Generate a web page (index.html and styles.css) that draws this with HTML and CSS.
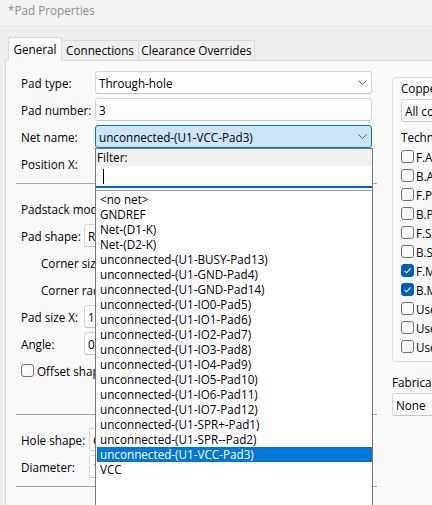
FILE: index.html
```html
<!DOCTYPE html>
<html>
<head>
<meta charset="utf-8">
<link rel="stylesheet" href="styles.css">
</head>
<body>
<div class="window">
  <div class="titlebar">*Pad Properties</div>
  <div class="tabs">
    <div class="tab active">General</div>
    <div class="tab t-conn">Connections</div>
    <div class="tab t-clear">Clearance Overrides</div>
  </div>
  <div class="panel">
    <div class="main">
      <div class="sec">
        <div class="row"><span class="lbl">Pad type:</span><div class="field combo"><span>Through-hole</span><svg class="chev" width="9" height="5" viewBox="0 0 9 5"><path d="M0.5 0.5 L4.5 4.5 L8.5 0.5" fill="none" stroke="#5f5f5f" stroke-width="1"/></svg></div></div>
        <div class="row"><span class="lbl">Pad number:</span><div class="field"><span>3</span></div></div>
        <div class="row"><span class="lbl">Net name:</span><div class="field combo focus"><span>unconnected-(U1-VCC-Pad3)</span><svg class="chev" width="9" height="5" viewBox="0 0 9 5"><path d="M0.5 0.5 L4.5 4.5 L8.5 0.5" fill="none" stroke="#5f5f5f" stroke-width="1"/></svg></div></div>
        <div class="row"><span class="lbl">Position X:</span><div class="field"><span>0</span></div></div>
      </div>
      <div class="sec sep sec-pad">
        <div class="row"><span class="lbl wide">Padstack mode:</span><div class="field combo"><span>Normal</span></div></div>
        <div class="row"><span class="lbl">Pad shape:</span><div class="field combo"><span>Rounded rectangle</span></div></div>
        <div class="row indent"><span class="lbl">Corner size:</span><div class="field"><span>25</span></div></div>
        <div class="row indent"><span class="lbl">Corner radius:</span><div class="field"><span>0.425</span></div></div>
        <div class="row"><span class="lbl">Pad size X:</span><div class="field"><span>1.7</span></div></div>
        <div class="row"><span class="lbl">Angle:</span><div class="field"><span>0</span></div></div>
        <div class="row"><span class="box"></span><span class="cbtext">Offset shape from hole</span></div>
      </div>
      <div class="sec sep sec-hole">
        <div class="row"><span class="lbl">Hole shape:</span><div class="field combo"><span>Circular</span></div></div>
        <div class="row"><span class="lbl">Diameter:</span><div class="field"><span>1</span></div></div>
      </div>
      <div class="sec sep sec-end"></div>
    </div>
    <div class="side">
      <div class="group">
        <div class="glabel">Copper layers:</div>
        <div class="field combo sfield"><span>All copper layers</span></div>
        <div class="glabel tech">Technical layers:</div>
        <div class="checks">
          <div class="chk-row"><span class="box"></span><span>F.Adhesive</span></div>
          <div class="chk-row"><span class="box"></span><span>B.Adhesive</span></div>
          <div class="chk-row"><span class="box"></span><span>F.Paste</span></div>
          <div class="chk-row"><span class="box"></span><span>B.Paste</span></div>
          <div class="chk-row"><span class="box"></span><span>F.Silkscreen</span></div>
          <div class="chk-row"><span class="box"></span><span>B.Silkscreen</span></div>
          <div class="chk-row"><span class="box on"><svg width="11" height="11" viewBox="0 0 11 11"><path d="M2.5 5.8 L4.6 7.8 L8.6 3.4" fill="none" stroke="#fff" stroke-width="1.1"/></svg></span><span>F.Mask</span></div>
          <div class="chk-row"><span class="box on"><svg width="11" height="11" viewBox="0 0 11 11"><path d="M2.5 5.8 L4.6 7.8 L8.6 3.4" fill="none" stroke="#fff" stroke-width="1.1"/></svg></span><span>B.Mask</span></div>
          <div class="chk-row"><span class="box"></span><span>User.Drawings</span></div>
          <div class="chk-row"><span class="box"></span><span>User.Comments</span></div>
          <div class="chk-row"><span class="box"></span><span>User.Eco1</span></div>
        </div>
      </div>
      <div class="glabel fab">Fabrication property:</div>
      <div class="field combo sfield"><span>None</span></div>
    </div>
  </div>

  <div class="popup">
    <div class="filterbar">Filter:</div>
    <div class="filterinput"><span class="caret"></span></div>
    <div class="list">
      <div class="item">&lt;no net&gt;</div>
      <div class="item">GNDREF</div>
      <div class="item">Net-(D1-K)</div>
      <div class="item">Net-(D2-K)</div>
      <div class="item">unconnected-(U1-BUSY-Pad13)</div>
      <div class="item">unconnected-(U1-GND-Pad4)</div>
      <div class="item">unconnected-(U1-GND-Pad14)</div>
      <div class="item">unconnected-(U1-IO0-Pad5)</div>
      <div class="item">unconnected-(U1-IO1-Pad6)</div>
      <div class="item">unconnected-(U1-IO2-Pad7)</div>
      <div class="item">unconnected-(U1-IO3-Pad8)</div>
      <div class="item">unconnected-(U1-IO4-Pad9)</div>
      <div class="item">unconnected-(U1-IO5-Pad10)</div>
      <div class="item">unconnected-(U1-IO6-Pad11)</div>
      <div class="item">unconnected-(U1-IO7-Pad12)</div>
      <div class="item">unconnected-(U1-SPR+-Pad1)</div>
      <div class="item">unconnected-(U1-SPR--Pad2)</div>
      <div class="item sel">unconnected-(U1-VCC-Pad3)</div>
      <div class="item">VCC</div>
    </div>
  </div>
</div>
</body>
</html>
```

FILE: styles.css
```css
html, body {
  margin: 0;
  padding: 0;
}
body {
  width: 432px;
  height: 505px;
  overflow: hidden;
  background: #f0f0f0;
  font-family: "Open Sans", "Noto Sans", sans-serif;
  font-size: 11.7px;
  color: #000;
}
.window {
  position: relative;
  height: 505px;
  overflow: hidden;
}
.titlebar {
  height: 25px;
  line-height: 20px;
  padding-left: 8px;
  background: #f3f3f3;
  color: #8e8e8e;
  font-size: 11.7px;
}
.tabs {
  height: 35px;
  box-sizing: border-box;
  display: flex;
  align-items: flex-end;
  padding-left: 8px;
  background: #efefef;
  position: relative;
  z-index: 1;
}
.tab {
  height: 20px;
  line-height: 19px;
  box-sizing: border-box;
  border: 1px solid #dadada;
  border-left: none;
  border-bottom: none;
  text-align: center;
  background: #f0f0f0;
  white-space: nowrap;
}
.tab.active {
  width: 54px;
  height: 24px;
  line-height: 23px;
  border-left: 1px solid #dadada;
  background: #f9f9f9;
  margin-bottom: -1px;
}
.t-conn { width: 77px; }
.t-clear { width: 116px; }

.panel {
  display: flex;
  margin-left: 5px;
  border-left: 1px solid #dadada;
  border-top: 1px solid #dadada;
  background: #f9f9f9;
  height: 444px;
  padding: 10px 0 0 10px;
  overflow: hidden;
}
.main {
  width: 361px;
  flex: none;
}
.sep {
  border-top: 1px solid #a9a9a9;
}
.sec-pad {
  margin-top: 8px;
  padding-top: 13px;
}
.sec-hole {
  margin-top: 32px;
  padding-top: 13px;
}
.sec-end {
  margin-top: 8px;
}
.row {
  display: flex;
  align-items: center;
  height: 23px;
  margin-bottom: 4px;
  padding: 0 5px;
}
.lbl {
  width: 74px;
  flex: none;
  white-space: nowrap;
  overflow: hidden;
}
.sec-pad .lbl { width: 63px; }
.sec-pad .lbl.wide { width: 90px; }
.sec-pad .indent { padding-left: 25px; }
.sec-pad .indent .lbl { width: 80px; }
.sec-hole .lbl { width: 68px; }

.field {
  flex: 1;
  height: 23px;
  box-sizing: border-box;
  border: 1px solid #d6d6d6;
  border-bottom-color: #c4c4c4;
  border-radius: 3px;
  background: #fefefe;
  display: flex;
  align-items: center;
  padding-left: 3px;
  white-space: nowrap;
  overflow: hidden;
}
.field.focus {
  background: #cce4f7;
  border-color: #0078d4;
}
.chev {
  margin-left: auto;
  margin-right: 4px;
  flex: none;
}
.box {
  width: 13px;
  height: 13px;
  box-sizing: border-box;
  border: 1px solid #707070;
  border-radius: 3px;
  background: #fbfbfb;
  flex: none;
  display: flex;
  align-items: center;
  justify-content: center;
}
.box.on {
  background: #005fb8;
  border-color: #005fb8;
}
.cbtext {
  margin-left: 3px;
  white-space: nowrap;
}

.side {
  flex: none;
  width: 250px;
  margin-left: 15px;
}
.group {
  margin-top: 6px;
  height: 285px;
  box-sizing: border-box;
  border: 1px solid #dcdcdc;
  border-radius: 4px;
  padding: 2px 0 0 8px;
}
.glabel {
  line-height: 16px;
  white-space: nowrap;
}
.sfield {
  width: 200px;
  flex: none;
  margin-top: 3px;
}
.tech { margin-top: 7px; }
.checks { margin-top: 2px; }
.chk-row {
  height: 19px;
  display: flex;
  align-items: center;
  gap: 2px;
  white-space: nowrap;
}
.fab { margin-top: 12px; }

.popup {
  position: absolute;
  left: 95px;
  top: 148px;
  width: 278px;
  height: 370px;
  box-sizing: border-box;
  border: 1px solid #787878;
  background: #fff;
  z-index: 5;
}
.filterbar {
  height: 17px;
  line-height: 17px;
  background: #f0f0f0;
  padding-left: 1px;
}
.filterinput {
  height: 22px;
  box-sizing: border-box;
  border-bottom: 2px solid #0067c0;
  background: #fff;
  display: flex;
  align-items: center;
  padding-left: 7px;
}
.caret {
  width: 1px;
  height: 15px;
  background: #000;
}
.list {
  margin-top: 2px;
  border-top: 1px solid #a8a8a8;
  padding: 1px 0 0 1px;
}
.item {
  height: 15px;
  line-height: 15px;
  padding-left: 3px;
  white-space: nowrap;
}
.item.sel {
  background: #0078d7;
  color: #fff;
}
```
